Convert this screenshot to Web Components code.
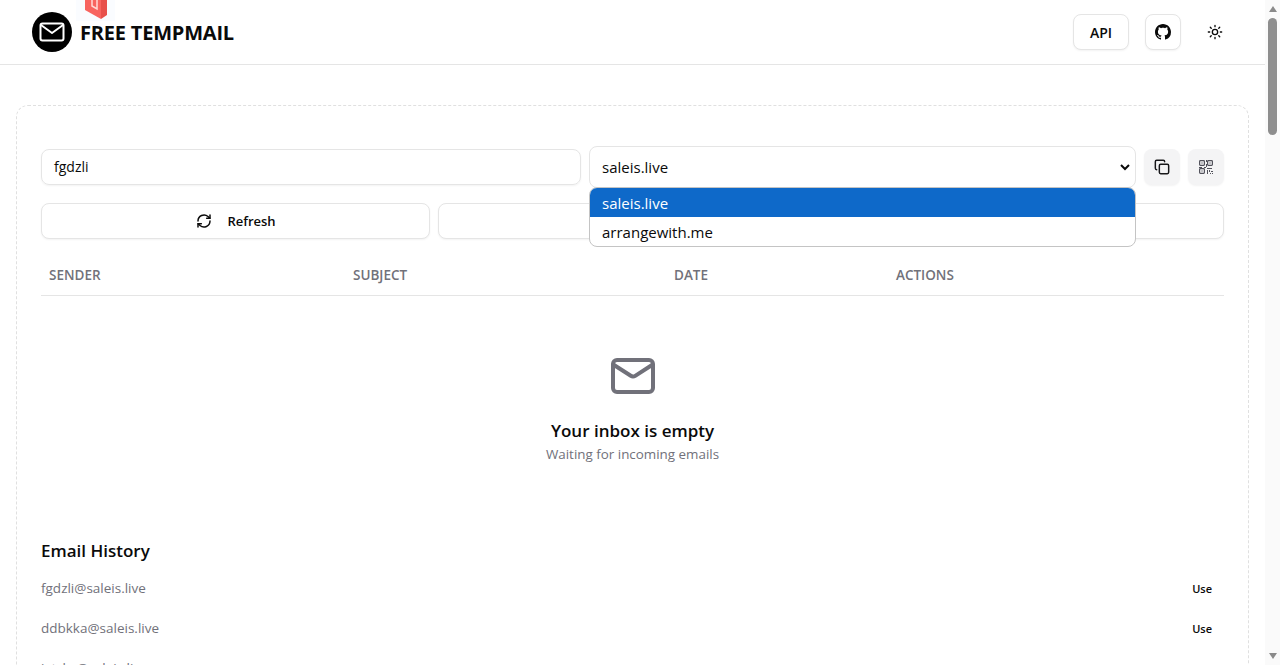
<!DOCTYPE html>
<html lang="en">
<head>
<meta charset="utf-8">
<title>Free Tempmail</title>
<style>
    html, body { margin: 0; height: 665px; overflow: hidden; background: #fff; }
    body { display: flex; font-family: "Open Sans", "Noto Sans", sans-serif; color: #0a0a0a; }
</style>
</head>
<body>
<tm-page>
    <tm-header></tm-header>
    <tm-inbox></tm-inbox>
</tm-page>
<tm-scrollbar></tm-scrollbar>

<script>
const FONT = '"Open Sans", "Noto Sans", sans-serif';

class TmPage extends HTMLElement {
    constructor() {
        super();
        this.attachShadow({ mode: 'open' });
        this.shadowRoot.innerHTML = `
            <style>
                :host { display: block; flex: 1; min-width: 0; height: 665px; overflow: hidden; }
            </style>
            <slot></slot>
        `;
    }
}

class TmScrollbar extends HTMLElement {
    constructor() {
        super();
        this.attachShadow({ mode: 'open' });
        this.shadowRoot.innerHTML = `
            <style>
                :host { display: flex; flex-direction: column; align-items: center; width: 15px; height: 665px; background: #fafafa; }
                .arrow { width: 0; height: 0; border-left: 4.5px solid transparent; border-right: 4.5px solid transparent; }
                .up { border-bottom: 6px solid #8a8a8a; margin-top: 6px; }
                .thumb { width: 9px; height: 117px; margin-top: 6px; border-radius: 5px; background: #8e8e8e; }
                .down { border-top: 6px solid #8a8a8a; margin-top: auto; margin-bottom: 6px; }
            </style>
            <div class="arrow up"></div>
            <div class="thumb"></div>
            <div class="arrow down"></div>
        `;
    }
}

class TmHeader extends HTMLElement {
    constructor() {
        super();
        this.attachShadow({ mode: 'open' });
        this.shadowRoot.innerHTML = `
            <style>
                :host { display: flex; align-items: center; justify-content: space-between; height: 64px; padding: 0 32px; border-bottom: 1px solid #e5e5e5; position: relative; font-family: ${FONT}; }
                .brand { display: flex; align-items: center; gap: 8px; }
                .logo { display: flex; align-items: center; justify-content: center; width: 40px; height: 40px; border-radius: 50%; background: #000; }
                .name { font-size: 20px; font-weight: 700; color: #0a0a0a; letter-spacing: -0.2px; }
                .actions { display: flex; align-items: center; gap: 16px; }
                .btn { display: flex; align-items: center; justify-content: center; height: 36px; box-sizing: border-box; border: 1px solid #e5e5e5; border-radius: 8px; background: #fff; box-shadow: 0 1px 2px rgba(0,0,0,.05); font-size: 14px; font-weight: 600; }
                .api { width: 56px; }
                .gh { width: 36px; }
                .sun { width: 36px; height: 36px; display: flex; align-items: center; justify-content: center; }
                .ribbon { position: absolute; left: 76px; top: 0; width: 39px; height: 21px; background: #fafcff; display: flex; justify-content: center; }
            </style>
            <div class="ribbon">
                <svg width="22" height="20" viewBox="0 0 22 20"><path d="M0 0h16v19L0 10z" fill="#f8645f"/><path d="M16 0h6v15l-6 4z" fill="#e8504b"/><path d="M7 0v6l5 3V0" fill="none" stroke="#ffd9d6" stroke-width="1.5"/></svg>
            </div>
            <div class="brand">
                <div class="logo">
                    <svg width="26" height="26" viewBox="0 0 26 26" fill="none" stroke="#fff" stroke-width="2" stroke-linejoin="round" stroke-linecap="round"><rect x="1.5" y="4.5" width="23" height="17" rx="2"/><path d="M2 6l11 8 11-8"/></svg>
                </div>
                <span class="name">FREE TEMPMAIL</span>
            </div>
            <div class="actions">
                <div class="btn api">API</div>
                <div class="btn gh">
                    <svg width="16" height="16" viewBox="0 0 16 16" fill="#0a0a0a"><path d="M8 0C3.58 0 0 3.58 0 8c0 3.54 2.29 6.53 5.47 7.59.4.07.55-.17.55-.38 0-.19-.01-.82-.01-1.49-2.01.37-2.53-.49-2.69-.94-.09-.23-.48-.94-.82-1.13-.28-.15-.68-.52-.01-.53.63-.01 1.08.58 1.23.82.72 1.21 1.87.87 2.33.66.07-.52.28-.87.51-1.07-1.78-.2-3.64-.89-3.64-3.95 0-.87.31-1.59.82-2.15-.08-.2-.36-1.02.08-2.12 0 0 .67-.21 2.2.82.64-.18 1.32-.27 2-.27s1.36.09 2 .27c1.53-1.04 2.2-.82 2.2-.82.44 1.1.16 1.92.08 2.12.51.56.82 1.27.82 2.15 0 3.07-1.87 3.75-3.65 3.95.29.25.54.73.54 1.48 0 1.07-.01 1.93-.01 2.2 0 .21.15.46.55.38A8.01 8.01 0 0 0 16 8c0-4.42-3.58-8-8-8z"/></svg>
                </div>
                <div class="sun">
                    <svg width="16" height="16" viewBox="0 0 24 24" fill="none" stroke="#0a0a0a" stroke-width="2" stroke-linecap="round"><circle cx="12" cy="12" r="4"/><path d="M12 2v2M12 20v2M4.93 4.93l1.41 1.41M17.66 17.66l1.41 1.41M2 12h2M20 12h2M6.34 17.66l-1.41 1.41M19.07 4.93l-1.41 1.41"/></svg>
                </div>
            </div>
        `;
    }
}

class TmIconButton extends HTMLElement {
    constructor() {
        super();
        this.attachShadow({ mode: 'open' });
        this.shadowRoot.innerHTML = `
            <style>
                :host { display: flex; align-items: center; justify-content: center; width: 36px; height: 36px; flex: none; border-radius: 8px; background: #f4f4f5; box-shadow: 0 1px 2px rgba(0,0,0,.05); }
            </style>
            <slot></slot>
        `;
    }
}

class TmActionButton extends HTMLElement {
    constructor() {
        super();
        this.attachShadow({ mode: 'open' });
        this.shadowRoot.innerHTML = `
            <style>
                :host { display: flex; align-items: center; justify-content: center; gap: 15px; height: 36px; box-sizing: border-box; padding-left: 1px; border: 1px solid #e5e5e5; border-radius: 8px; background: #fff; box-shadow: 0 1px 2px rgba(0,0,0,.05); font-size: 13px; font-weight: 600; color: #0a0a0a; }
            </style>
            <slot name="icon"></slot><slot></slot>
        `;
    }
}

class TmDomainSelect extends HTMLElement {
    constructor() {
        super();
        this.attachShadow({ mode: 'open' });
        this.shadowRoot.innerHTML = `
            <style>
                :host { display: block; position: relative; flex: none; width: 547px; height: 42px; font-size: 15px; color: #0a0a0a; }
                .box { display: flex; align-items: center; justify-content: space-between; height: 100%; box-sizing: border-box; padding: 0 5px 0 12px; border: 1px solid #e5e5e5; border-radius: 8px; background: #fff; }
                .menu { position: absolute; z-index: 2; left: 0; top: 41px; width: 547px; box-sizing: border-box; border: 1px solid #c4c4c4; border-radius: 8px; background: #fff; overflow: hidden; }
                .opt { height: 29px; line-height: 31px; padding-left: 12px; }
                .opt.on { background: #0e69c9; color: #fff; }
            </style>
            <div class="box">
                <span>saleis.live</span>
                <svg width="10" height="7" viewBox="0 0 10 7" fill="none" stroke="#0a0a0a" stroke-width="2"><path d="M1 1l4 4 4-4"/></svg>
            </div>
            <div class="menu">
                <div class="opt on">saleis.live</div>
                <div class="opt">arrangewith.me</div>
            </div>
        `;
    }
}

class TmHistoryRow extends HTMLElement {
    constructor() {
        super();
        this.attachShadow({ mode: 'open' });
        this.shadowRoot.innerHTML = `
            <style>
                :host { display: flex; align-items: center; justify-content: space-between; height: 40px; font-size: 13.5px; color: #71717a; }
                .use { font-size: 11px; font-weight: 600; color: #0a0a0a; padding-right: 12px; }
            </style>
            <slot></slot>
            <span class="use">Use</span>
        `;
    }
}

class TmInbox extends HTMLElement {
    constructor() {
        super();
        this.attachShadow({ mode: 'open' });
        this.shadowRoot.innerHTML = `
            <style>
                :host { display: block; margin: 40px 16px 0; padding: 40px 24px 0; border: 1px dashed #e0e0e0; border-radius: 12px; font-family: ${FONT}; }
                .top { display: flex; align-items: center; gap: 8px; }
                .input { flex: 1; height: 36px; box-sizing: border-box; display: flex; align-items: center; padding: 0 12px 2px; border: 1px solid #e5e5e5; border-radius: 8px; box-shadow: 0 1px 2px rgba(0,0,0,.05); font-size: 14px; color: #0a0a0a; }
                .buttons { display: grid; grid-template-columns: repeat(3, 1fr); gap: 8px; margin-top: 15px; }
                .head { display: grid; grid-template-columns: 304px 321px 222px 1fr; height: 40px; align-items: center; margin-top: 16px; padding-left: 8px; border-bottom: 1px solid #e5e5e5; font-size: 13.5px; font-weight: 600; color: #71717a; }
                .empty { display: flex; flex-direction: column; align-items: center; padding-top: 56px; }
                .empty svg { display: block; }
                .title { margin-top: 17px; font-size: 17px; line-height: 28px; font-weight: 600; color: #0a0a0a; }
                .sub { font-size: 13.4px; line-height: 20px; margin-top: -1px; color: #71717a; }
                h2 { margin: 73px 0 0; font-size: 17px; line-height: 28px; font-weight: 600; color: #0a0a0a; }
                .history { margin-top: 3px; }
            </style>
            <div class="top">
                <div class="input">fgdzli</div>
                <tm-domain-select></tm-domain-select>
                <tm-icon-button>
                    <svg width="16" height="16" viewBox="0 0 24 24" fill="none" stroke="#18181b" stroke-width="2.2" stroke-linecap="round" stroke-linejoin="round"><rect x="8" y="8" width="14" height="14" rx="2"/><path d="M4 16c-1.1 0-2-.9-2-2V4c0-1.1.9-2 2-2h10c1.1 0 2 .9 2 2"/></svg>
                </tm-icon-button>
                <tm-icon-button>
                    <svg width="14" height="14" viewBox="0 0 14 14" fill="none" stroke="#52525b" stroke-width="1.2"><rect x=".6" y=".6" width="4.8" height="4.8" rx=".8"/><rect x="8.6" y=".6" width="4.8" height="4.8" rx=".8"/><rect x=".6" y="8.6" width="4.8" height="4.8" rx=".8"/><path fill="#52525b" stroke="none" d="M2.4 2.4h1.2v1.2H2.4zM10.4 2.4h1.2v1.2h-1.2zM2.4 10.4h1.2v1.2H2.4zM7 0h1v2H7zM7 4h1v3H7zM0 7h3v1H0zM5 7h2v1H5zM8 8h5v1H8zM8 10h1v4H8zM10 10h1v2h-1zM12 11h2v1h-2zM11 13h1v1h-1zM13 13h1v1h-1z"/></svg>
                </tm-icon-button>
            </div>
            <div class="buttons">
                <tm-action-button>
                    <svg slot="icon" width="16" height="16" viewBox="0 0 24 24" fill="none" stroke="#0a0a0a" stroke-width="2.2" stroke-linecap="round" stroke-linejoin="round"><path d="M3 12a9 9 0 0 1 15-6.7L21 8"/><path d="M21 3v5h-5"/><path d="M21 12a9 9 0 0 1-15 6.7L3 16"/><path d="M3 21v-5h5"/></svg>
                    Refresh
                </tm-action-button>
                <tm-action-button></tm-action-button>
                <tm-action-button></tm-action-button>
            </div>
            <div class="head"><span>SENDER</span><span>SUBJECT</span><span>DATE</span><span>ACTIONS</span></div>
            <div class="empty">
                <svg width="48" height="48" viewBox="0 0 24 24" fill="none" stroke="#71717a" stroke-width="2" stroke-linecap="round" stroke-linejoin="round"><rect x="2" y="4" width="20" height="16" rx="2"/><path d="M2.5 6.5l8.4 5.4a2 2 0 0 0 2.2 0l8.4-5.4"/></svg>
                <div class="title">Your inbox is empty</div>
                <div class="sub">Waiting for incoming emails</div>
            </div>
            <h2>Email History</h2>
            <div class="history">
                <tm-history-row>fgdzli@saleis.live</tm-history-row>
                <tm-history-row>ddbkka@saleis.live</tm-history-row>
                <tm-history-row>jxtzkc@saleis.live</tm-history-row>
            </div>
        `;
    }
}

customElements.define('tm-page', TmPage);
customElements.define('tm-scrollbar', TmScrollbar);
customElements.define('tm-header', TmHeader);
customElements.define('tm-icon-button', TmIconButton);
customElements.define('tm-action-button', TmActionButton);
customElements.define('tm-domain-select', TmDomainSelect);
customElements.define('tm-history-row', TmHistoryRow);
customElements.define('tm-inbox', TmInbox);
</script>
</body>
</html>
